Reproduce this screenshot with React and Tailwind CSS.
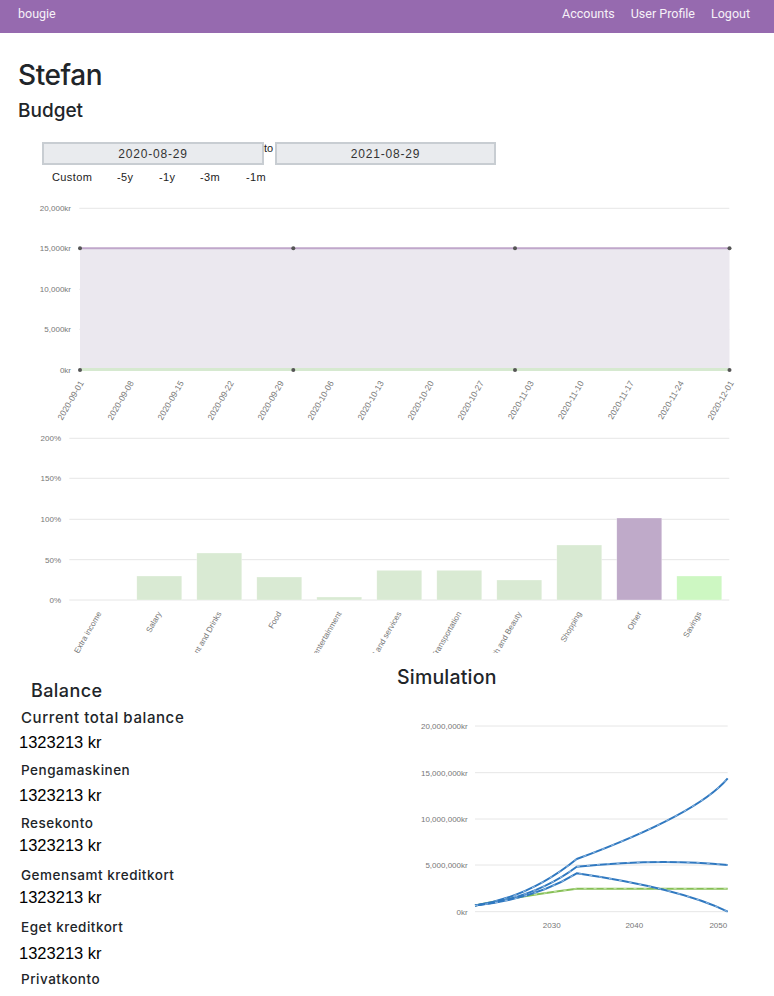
import React from "react";

const F_INTER = { fontFamily: "Inter, 'Noto Sans', sans-serif" };
const LBL = "#777";

function Chart1() {
  const grid = [
    { y: 13.3, l: "20,000kr" },
    { y: 53.3, l: "15,000kr" },
    { y: 94.3, l: "10,000kr" },
    { y: 134.3, l: "5,000kr" },
    { y: 175, l: "0kr" },
  ];
  const dates = [
    "2020-09-01", "2020-09-08", "2020-09-15", "2020-09-22", "2020-09-29", "2020-10-06", "2020-10-13",
    "2020-10-20", "2020-10-27", "2020-11-03", "2020-11-10", "2020-11-17", "2020-11-24", "2020-12-01",
  ];
  const pts = [80, 293.3, 515, 729.5];
  return (
    <svg width="774" height="230" className="block" style={{ fontFamily: "'Liberation Sans', Arial, sans-serif" }}>
      {grid.map((g) => (
        <g key={g.l}>
          <line x1="79.3" x2="729.3" y1={g.y} y2={g.y} stroke="#e6e6e6" strokeWidth="1" />
          <text x="71" y={g.y + 3} textAnchor="end" fontSize="8" fill={LBL}>{g.l}</text>
        </g>
      ))}
      <rect x="80" y="53.3" width="649.5" height="121.7" fill="#ebe8ef" />
      <line x1="80" x2="729.5" y1="53.3" y2="53.3" stroke="#c0a7cb" strokeWidth="2" />
      <line x1="80" x2="729.5" y1="174.5" y2="174.5" stroke="#d6e9d0" strokeWidth="3" />
      {pts.map((x) => (
        <g key={x}>
          <circle cx={x} cy="53.3" r="2" fill="#555" />
          <circle cx={x} cy="175" r="2" fill="#555" />
        </g>
      ))}
      {dates.map((d, i) => {
        const x = 80 + i * 50 + 4;
        return (
          <text key={d} x={x} y="188" textAnchor="end" fontSize="8.5" fill={LBL} transform={`rotate(-60 ${x} 188)`}>
            {d}
          </text>
        );
      })}
    </svg>
  );
}

function Chart2() {
  const grid = [
    { y: 13.3, l: "200%" },
    { y: 53.3, l: "150%" },
    { y: 94.3, l: "100%" },
    { y: 134.7, l: "50%" },
    { y: 175, l: "0%" },
  ];
  const bars = [
    { l: "Extra income", top: 175, c: "#d9ead3" },
    { l: "Salary", top: 151, c: "#d9ead3" },
    { l: "Restaurant and Drinks", top: 128, c: "#d9ead3" },
    { l: "Food", top: 152, c: "#d9ead3" },
    { l: "Culture and entertainment", top: 172, c: "#d9ead3" },
    { l: "Household and services", top: 145.3, c: "#d9ead3" },
    { l: "Transportation", top: 145.3, c: "#d9ead3" },
    { l: "Health and Beauty", top: 155, c: "#d9ead3" },
    { l: "Shopping", top: 120, c: "#d9ead3" },
    { l: "Other", top: 93, c: "#bfaac9" },
    { l: "Savings", top: 151, c: "#cdf7c2" },
  ];
  return (
    <svg width="774" height="228" className="block" style={{ fontFamily: "'Liberation Sans', Arial, sans-serif" }}>
      {grid.map((g) => (
        <g key={g.l}>
          <line x1="69.3" x2="729.3" y1={g.y} y2={g.y} stroke="#e6e6e6" strokeWidth="1" />
          <text x="61" y={g.y + 3} textAnchor="end" fontSize="8" fill={LBL}>{g.l}</text>
        </g>
      ))}
      {bars.map((b, i) => {
        const x0 = 69.3 + 60 * i;
        const cx = x0 + 30 + 2.5;
        return (
          <g key={b.l}>
            {b.top < 175 && (
              <rect x={x0 + 7.5} y={b.top} width="45" height={175 - b.top} fill={b.c} stroke="#ffffff" strokeOpacity="0.6" strokeWidth="0.5" />
            )}
            <text x={cx} y="188.5" textAnchor="end" fontSize="8" fill={LBL} transform={`rotate(-60 ${cx} 188.5)`}>
              {b.l}
            </text>
          </g>
        );
      })}
    </svg>
  );
}

function SimChart() {
  const grid = [
    { y: 26, l: "20,000,000kr" },
    { y: 72.7, l: "15,000,000kr" },
    { y: 119, l: "10,000,000kr" },
    { y: 165, l: "5,000,000kr" },
    { y: 211.7, l: "0kr" },
  ];
  const blue = [
    "M85,205.5 Q140,197 186.7,159 Q307.7,114.2 337.7,78.3",
    "M85,205.5 Q145,198 186.7,166.7 Q270,158 337.7,165",
    "M85,205.5 Q145,199 186.7,173.3 Q291,188.5 337.7,211.7",
  ];
  const green = "M85,205.5 Q130,196 186.7,188.7 L337.7,188.7";
  return (
    <svg width="384" height="240" className="block" style={{ fontFamily: "'Liberation Sans', Arial, sans-serif" }}>
      {grid.map((g) => (
        <g key={g.l}>
          <line x1="85" x2="337.7" y1={g.y} y2={g.y} stroke="#e6e6e6" strokeWidth="1" />
          <text x="77.7" y={g.y + 3} textAnchor="end" fontSize="8" fill={LBL}>{g.l}</text>
        </g>
      ))}
      {[
        { x: 161.7, l: "2030" },
        { x: 244.3, l: "2040" },
        { x: 328.3, l: "2050" },
      ].map((t) => (
        <text key={t.l} x={t.x} y="228" textAnchor="middle" fontSize="8" fill={LBL}>{t.l}</text>
      ))}
      <path d={green} fill="none" stroke="#86bf55" strokeWidth="2" />
      <path d={green} fill="none" stroke="#d6ecc2" strokeWidth="0.8" strokeDasharray="3 7" />
      {blue.map((d) => (
        <g key={d}>
          <path d={d} fill="none" stroke="#2f78c0" strokeWidth="2" />
          <path d={d} fill="none" stroke="#b9d3ee" strokeWidth="0.8" strokeDasharray="3 7" />
        </g>
      ))}
    </svg>
  );
}

const accounts = [
  { name: "Pengamaskinen", mLabel: "mt-[13.9px]", mAmt: "mt-[9.5px]" },
  { name: "Resekonto", mLabel: "mt-[13.8px]", mAmt: "mt-[5.9px]" },
  { name: "Gemensamt kreditkort", mLabel: "mt-[15.5px]", mAmt: "mt-[7.2px]" },
  { name: "Eget kreditkort", mLabel: "mt-[14.8px]", mAmt: "mt-[10.8px]" },
];

const AMT = { fontFamily: "'Liberation Sans', Arial, sans-serif" };

export default function App() {
  return (
    <div className="w-[774px] bg-white text-[#212529]" style={F_INTER}>
      <header
        className="h-[33px] bg-[#966aaf] flex items-start justify-between pl-[18px] pr-[24px] pt-[8px] text-[#f6f1f8] text-[12.5px] leading-none"
        style={{ fontFamily: "Roboto, 'Liberation Sans', sans-serif" }}
      >
        <span>bougie</span>
        <nav className="flex gap-[16px]">
          <span>Accounts</span>
          <span>User Profile</span>
          <span>Logout</span>
        </nav>
      </header>

      <div className="px-[18px]">
        <h1 className="mt-[28px] text-[28px] leading-none font-medium tracking-[-0.4px]">Stefan</h1>
        <h2 className="mt-[11.5px] text-[19px] leading-none font-medium">Budget</h2>

        <div className="mt-[22.6px] ml-[24px] flex items-start" style={AMT}>
          <div className="w-[222px] h-[23.4px] bg-[#e9ebee] border-2 border-[#c8cdd2] flex items-center justify-center text-[12px] tracking-[0.8px] text-[#333]">
            2020-08-29
          </div>
          <span className="text-[11px] leading-none mt-[1px] w-[11px] text-[#222]">to</span>
          <div className="w-[221px] h-[23.4px] bg-[#e9ebee] border-2 border-[#c8cdd2] flex items-center justify-center text-[12px] tracking-[0.8px] text-[#333]">
            2021-08-29
          </div>
        </div>

        <div className="mt-[7px] ml-[34px] flex text-[11px] leading-none tracking-[0.4px] text-[#222]" style={AMT}>
          <span className="w-[65px]">Custom</span>
          <span className="w-[42px]">-5y</span>
          <span className="w-[41px]">-1y</span>
          <span className="w-[46px]">-3m</span>
          <span>-1m</span>
        </div>
      </div>

      <div className="mt-[11.2px]">
        <Chart1 />
        <Chart2 />
      </div>

      <div className="grid grid-cols-[390px_384px]">
        <div>
          <h3 className="mt-[29.6px] pl-[31px] text-[18px] leading-none font-medium tracking-[0.4px]">Balance</h3>
          <div className="mt-[10.1px] pl-[21px] text-[15px] leading-none font-medium tracking-[0.6px]">Current total balance</div>
          <div className="mt-[8.2px] pl-[19px] text-[16.5px] leading-none text-black" style={AMT}>1323213 kr</div>
          {accounts.map((a) => (
            <div key={a.name}>
              <div className={`${a.mLabel} pl-[21px] text-[13.5px] leading-none font-medium tracking-[0.5px]`}>{a.name}</div>
              <div className={`${a.mAmt} pl-[19px] text-[16.5px] leading-none text-black`} style={AMT}>1323213 kr</div>
            </div>
          ))}
          <div className="mt-[11.5px] pb-[12px] pl-[21px] text-[13.5px] leading-none font-medium tracking-[0.5px]">Privatkonto</div>
        </div>
        <div>
          <h3 className="mt-[15.3px] pl-[7px] text-[19.5px] leading-none font-medium tracking-[0.2px]">Simulation</h3>
          <div className="mt-[12.2px]">
            <SimChart />
          </div>
        </div>
      </div>
    </div>
  );
}
